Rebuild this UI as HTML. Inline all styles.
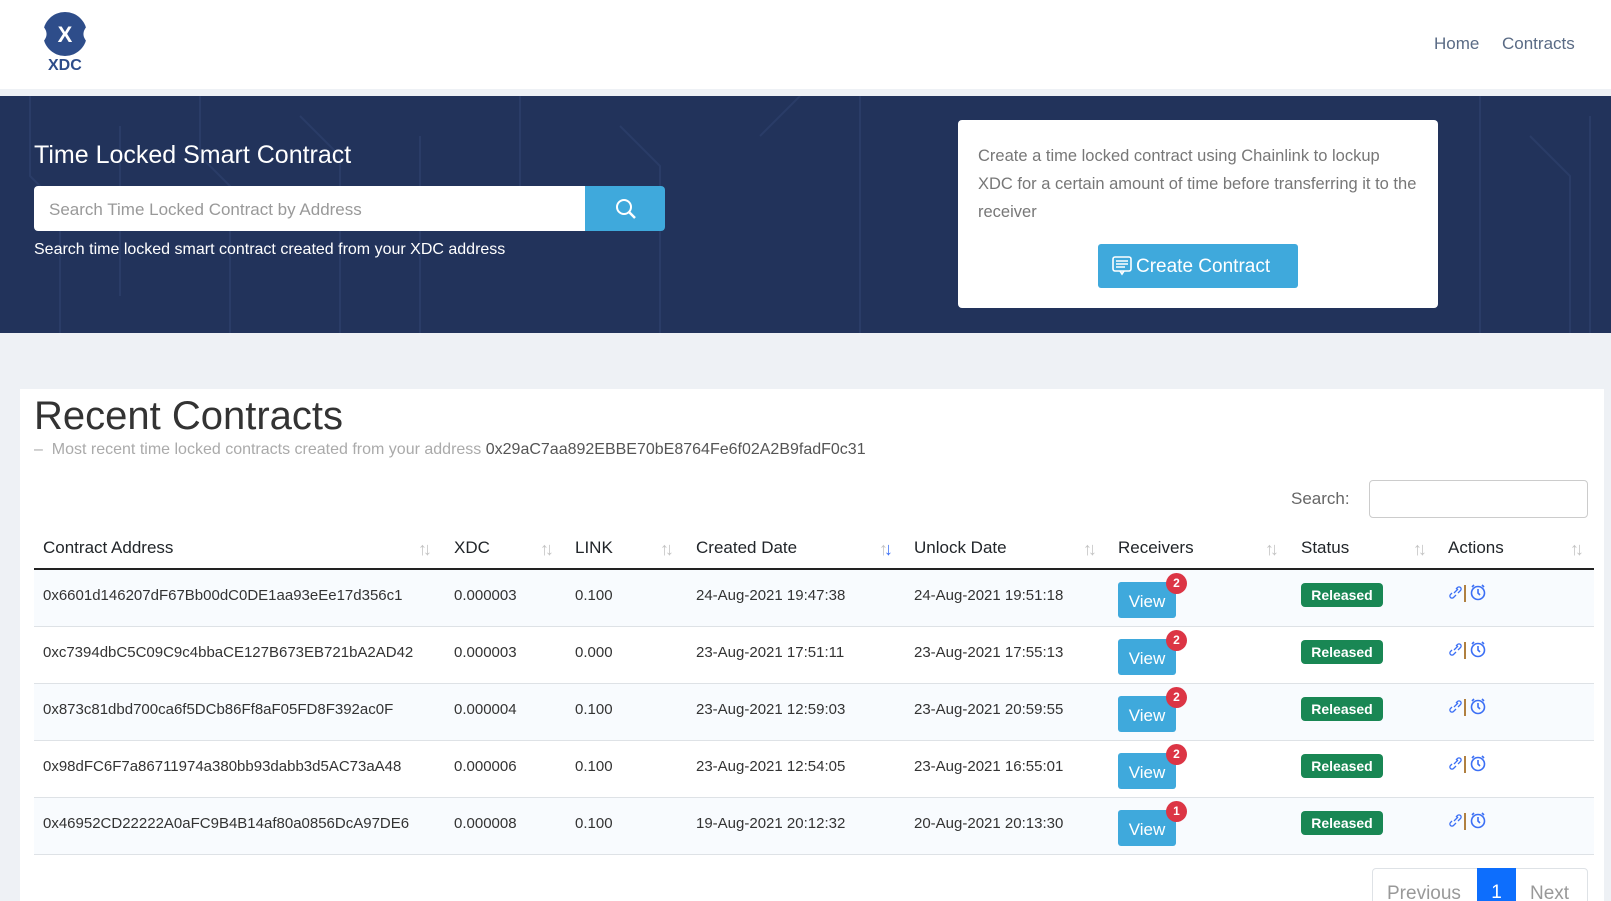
<!DOCTYPE html>
<html><head><meta charset="utf-8"><style>
*{box-sizing:border-box;margin:0;padding:0}
html{width:1611px;height:901px;overflow:hidden}
body{width:1611px;height:901px;overflow:hidden;background:#eef1f5;font-family:"Liberation Sans",sans-serif;color:#212529;position:relative}
.abs{position:absolute}
nav{position:absolute;left:0;top:0;width:1611px;height:89px;background:#fff}
.banner{position:absolute;left:0;top:96px;width:1611px;height:237px;background:#22335b;overflow:hidden}
.card{position:absolute;left:20px;top:389px;width:1584px;height:512px;background:#fff}
.row{position:absolute;left:34px;width:1560px;height:57px;border-bottom:1px solid #dee2e6;font-size:15px;color:#333}
.row.s{background:#f8fbfe}
.row span{position:absolute;top:17px}
.view{position:absolute;top:12px;left:1084px;width:58px;height:36px;background:#3fa9dc;color:#fff;border-radius:3px;font-size:17px;text-align:center;line-height:40px}
.badge{position:absolute;top:-9px;right:-11px;width:21px;height:21px;border-radius:50%;background:#dc3545;color:#fff;font-size:12px;font-weight:bold;line-height:21px;text-align:center}
.rel{position:absolute;left:1267px;top:13px;width:82px;height:24px;background:#198754;color:#fff;border-radius:4px;font-size:14px;font-weight:bold;text-align:center;line-height:24px}
.act{position:absolute;left:1414px;top:12px;width:50px;height:22px}
.hd{position:absolute;top:538px;font-size:17px;color:#212529}
.ar{position:absolute;top:539px;font-size:18px;color:#c4c4c4;letter-spacing:-4px}
</style></head><body>
<nav>
<svg class="abs" style="left:41px;top:10px" width="48" height="48" viewBox="0 0 48 48"><circle cx="24" cy="24" r="22" fill="#2e4d8a"/><path d="M1 18 Q6 24 1 30 M47 18 Q42 24 47 30" stroke="#fff" stroke-width="4" fill="none"/><text x="24" y="32" font-size="22" font-weight="bold" fill="#fff" text-anchor="middle" font-family="Liberation Sans">X</text></svg>
<div class="abs" style="left:48px;top:57px;font-size:16px;font-weight:bold;color:#2e4d8a">XDC</div>
<div class="abs" style="left:1434px;top:34px;font-size:17px;color:#5a6b85">Home</div>
<div class="abs" style="left:1502px;top:34px;font-size:17px;color:#5a6b85">Contracts</div>
</nav>
<div class="abs" style="left:0;top:89px;width:1611px;height:7px;background:#eef1f5"></div>
<div class="banner">
<svg class="abs" style="left:0;top:0" width="1611" height="237" stroke="#2c3f6b" stroke-width="2" fill="none" opacity="0.8"><path d="M30 0 V80 L60 110 V237 M120 30 V200 M200 0 V60 L230 90 V237 M300 20 L340 60 V237 M420 40 V237 M520 0 V120 M620 30 L660 70 V237 M760 40 L800 0 M860 0 V237 M1480 0 V237 M1530 40 L1570 80 V237 M1590 20 V237"/></svg>
<div class="abs" style="left:34px;top:45px;font-size:25px;color:#fff">Time Locked Smart Contract</div>
<div class="abs" style="left:34px;top:90px;width:552px;height:45px;background:#fff;border-radius:4px 0 0 4px;font-size:17px;color:#999;padding:14px 15px">Search Time Locked Contract by Address</div>
<div class="abs" style="left:585px;top:90px;width:80px;height:45px;background:#3fa9dc;border-radius:0 4px 4px 0"><svg class="abs" style="left:30px;top:12px" width="22" height="22" viewBox="0 0 22 22"><circle cx="9" cy="9" r="7" stroke="#fff" stroke-width="2" fill="none"/><path d="M14 14 L20 20" stroke="#fff" stroke-width="2.5"/></svg></div>
<div class="abs" style="left:34px;top:145px;font-size:16px;color:#fff">Search time locked smart contract created from your XDC address</div>
<div class="abs" style="left:958px;top:24px;width:480px;height:188px;background:#fff;border-radius:4px">
<div class="abs" style="left:20px;top:22px;width:440px;font-size:16.5px;line-height:28px;color:#777">Create a time locked contract using Chainlink to lockup XDC for a certain amount of time before transferring it to the receiver</div>
<div class="abs" style="left:140px;top:124px;width:200px;height:44px;background:#3fa9dc;border-radius:3px;color:#fff;font-size:19px;line-height:46px;padding-left:38px">Create Contract</div>
<svg class="abs" style="left:154px;top:136px" width="20" height="20" viewBox="0 0 20 20" fill="none" stroke="#fff" stroke-width="1.6"><rect x="1" y="1" width="18" height="14" rx="2"/><path d="M4 5H16M4 8H16M4 11H13M8 15 L10 18 L12 15"/></svg>
</div>
</div>
<div class="card">
<div class="abs" style="left:14px;top:5px;font-size:40px;color:#333">Recent Contracts</div>
<div class="abs" style="left:14px;top:52px;font-size:16px;color:#aaa">–&nbsp; Most recent time locked contracts created from your address <span style="color:#555">0x29aC7aa892EBBE70bE8764Fe6f02A2B9fadF0c31</span></div>
<div class="abs" style="left:1271px;top:100px;font-size:17px;color:#666">Search:</div>
<div class="abs" style="left:1349px;top:91px;width:219px;height:38px;border:1px solid #ccc;border-radius:4px"></div>
</div>
<div class="hd" style="left:43px">Contract Address</div><div class="ar" style="left:418px">↑↓</div>
<div class="hd" style="left:454px">XDC</div><div class="ar" style="left:540px">↑↓</div>
<div class="hd" style="left:575px">LINK</div><div class="ar" style="left:660px">↑↓</div>
<div class="hd" style="left:696px">Created Date</div><div class="ar" style="left:879px">↑<span style="color:#3b6ff5">↓</span></div>
<div class="hd" style="left:914px">Unlock Date</div><div class="ar" style="left:1083px">↑↓</div>
<div class="hd" style="left:1118px">Receivers</div><div class="ar" style="left:1265px">↑↓</div>
<div class="hd" style="left:1301px">Status</div><div class="ar" style="left:1413px">↑↓</div>
<div class="hd" style="left:1448px">Actions</div><div class="ar" style="left:1570px">↑↓</div>
<div class="abs" style="left:34px;top:568px;width:1560px;height:2px;background:#222"></div>

<svg width="0" height="0" style="position:absolute"><defs><g id="ic"><path d="M4 11 L2.5 12.5 a2 2 0 0 0 3 3 L8 13 M8 7 L9.5 5.5 a2 2 0 0 1 3 3 L10 11 M6 11 L10 7" stroke="#3b6ff5" stroke-width="1.3" fill="none"/><rect x="16" y="3" width="2" height="17" fill="#b08040"/><circle cx="30" cy="11" r="6.5" stroke="#3b6ff5" stroke-width="1.6" fill="none"/><path d="M30 7 V11 L32 13 M24 5 L26 3 M36 5 L34 3" stroke="#3b6ff5" stroke-width="1.6" fill="none"/></g></defs></svg>

<div class="row s" style="top:570px"><span style="left:9px">0x6601d146207dF67Bb00dC0DE1aa93eEe17d356c1</span><span style="left:420px">0.000003</span><span style="left:541px">0.100</span><span style="left:662px">24-Aug-2021 19:47:38</span><span style="left:880px">24-Aug-2021 19:51:18</span><div class="view">View<div class="badge">2</div></div><div class="rel">Released</div><svg class="act"><use href="#ic"/></svg></div>
<div class="row" style="top:627px"><span style="left:9px">0xc7394dbC5C09C9c4bbaCE127B673EB721bA2AD42</span><span style="left:420px">0.000003</span><span style="left:541px">0.000</span><span style="left:662px">23-Aug-2021 17:51:11</span><span style="left:880px">23-Aug-2021 17:55:13</span><div class="view">View<div class="badge">2</div></div><div class="rel">Released</div><svg class="act"><use href="#ic"/></svg></div>
<div class="row s" style="top:684px"><span style="left:9px">0x873c81dbd700ca6f5DCb86Ff8aF05FD8F392ac0F</span><span style="left:420px">0.000004</span><span style="left:541px">0.100</span><span style="left:662px">23-Aug-2021 12:59:03</span><span style="left:880px">23-Aug-2021 20:59:55</span><div class="view">View<div class="badge">2</div></div><div class="rel">Released</div><svg class="act"><use href="#ic"/></svg></div>
<div class="row" style="top:741px"><span style="left:9px">0x98dFC6F7a86711974a380bb93dabb3d5AC73aA48</span><span style="left:420px">0.000006</span><span style="left:541px">0.100</span><span style="left:662px">23-Aug-2021 12:54:05</span><span style="left:880px">23-Aug-2021 16:55:01</span><div class="view">View<div class="badge">2</div></div><div class="rel">Released</div><svg class="act"><use href="#ic"/></svg></div>
<div class="row s" style="top:798px"><span style="left:9px">0x46952CD22222A0aFC9B4B14af80a0856DcA97DE6</span><span style="left:420px">0.000008</span><span style="left:541px">0.100</span><span style="left:662px">19-Aug-2021 20:12:32</span><span style="left:880px">20-Aug-2021 20:13:30</span><div class="view">View<div class="badge">1</div></div><div class="rel">Released</div><svg class="act"><use href="#ic"/></svg></div>

<div class="abs" style="left:1372px;top:868px;width:216px;height:44px;border:1px solid #dee2e6;border-radius:4px;background:#fff;font-size:19px;color:#999">
<span class="abs" style="left:14px;top:14px">Previous</span>
<div class="abs" style="left:104px;top:-1px;width:39px;height:46px;background:#0d6efd;color:#fff;text-align:center;line-height:50px">1</div>
<span class="abs" style="left:157px;top:14px">Next</span></div>
</body></html>
